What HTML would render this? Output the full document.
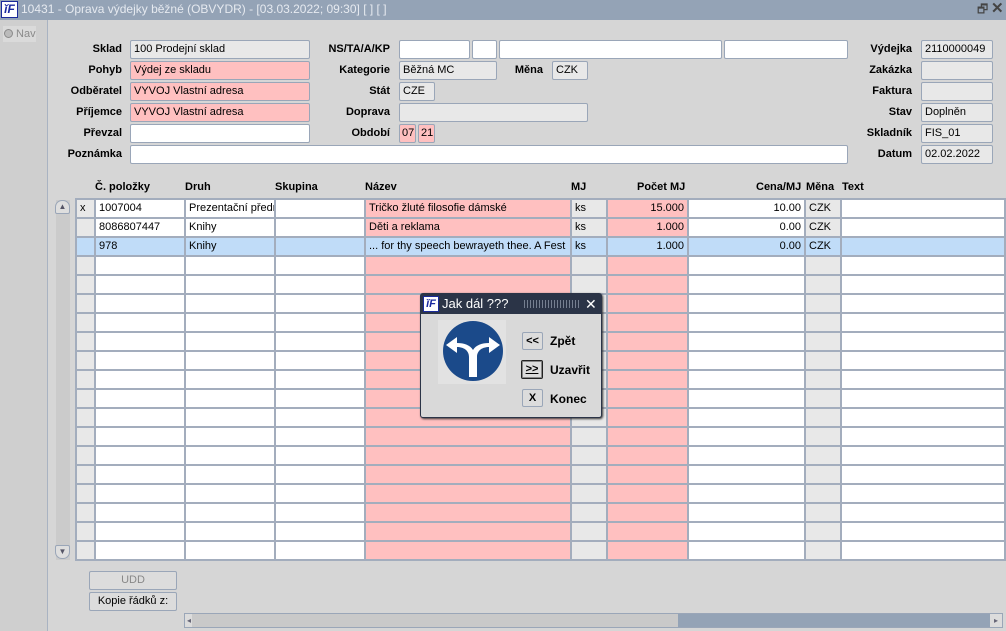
<!DOCTYPE html>
<html><head><meta charset="utf-8"><style>
*{box-sizing:border-box;margin:0;padding:0}
body{width:1006px;height:631px;background:#d6d6d6;font-family:"Liberation Sans",Arial,sans-serif;font-size:11px;position:relative;overflow:hidden;color:#000}
.a{position:absolute}
.tb{left:0;top:0;width:1006px;height:20px;background:#94a3b6;color:#e6eaf0;font-size:13px;line-height:19px}
.logo{position:absolute;width:17px;height:17px;background:#fff;border:1px solid #1a2a9a;color:#1a2aa0;font-weight:bold;font-style:italic;font-size:12px;line-height:15px;text-align:center}
.lbl{position:absolute;font-weight:bold;font-size:11px;text-align:right;line-height:18px}
.f{position:absolute;height:19px;border:1px solid #9aa6b8;border-radius:2px;background:#e8e8e8;padding-left:3px;line-height:17px;font-size:11px;white-space:nowrap;overflow:hidden}
.w{background:#fff}.p{background:#ffc0c0}
table{position:absolute;left:75px;top:198px;width:929px;border-collapse:collapse;table-layout:fixed}
td{border:2px solid #a3adbd;height:19px;padding:0 3px;font-size:11px;white-space:nowrap;overflow:hidden;background:#fff;line-height:15px}
td.g{background:#e8e8e8}td.pk{background:#ffc0c0}td.r{text-align:right}
tr.s td{background:#c0dcf8}
.th{position:absolute;top:181px;font-weight:bold;font-size:11px}
.btn{position:absolute;border:1px solid #9aa6b8;border-radius:2px;background:#dcdcdc;text-align:center;font-size:11px;line-height:16px}
</style></head><body>
<div class="a tb"><div class="logo" style="left:1px;top:1px">ĭF</div><span style="position:absolute;left:21px;font-size:12px">10431 - Oprava výdejky běžné (OBVYDR) - [03.03.2022; 09:30]  [ ]  [ ]</span>
<span style="position:absolute;left:977px;top:0;color:#444;font-size:12px">🗗</span><span style="position:absolute;left:991px;top:-1px;color:#444;font-size:15px;font-weight:bold">✕</span></div>
<div class="a" style="left:0;top:20px;width:48px;height:611px;background:#cfcfcf;border-right:1px solid #a9b3c2"></div>
<div class="a" style="left:3px;top:26px;width:33px;height:16px;background:#dadada;color:#8a8a8a;font-size:11px;line-height:16px;white-space:nowrap;overflow:hidden"><span style="display:inline-block;width:9px;height:9px;border-radius:50%;border:1px solid #8a8a8a;background:#bbb;vertical-align:-1px;margin-left:1px"></span> Nav</div>

<div class="lbl" style="left:60px;top:40px;width:62px">Sklad</div><div class="f" style="left:130px;top:40px;width:180px">100 Prodejní sklad</div>
<div class="lbl" style="left:60px;top:61px;width:62px">Pohyb</div><div class="f p" style="left:130px;top:61px;width:180px">Výdej ze skladu</div>
<div class="lbl" style="left:40px;top:82px;width:82px">Odběratel</div><div class="f p" style="left:130px;top:82px;width:180px">VYVOJ Vlastní adresa</div>
<div class="lbl" style="left:40px;top:103px;width:82px">Příjemce</div><div class="f p" style="left:130px;top:103px;width:180px">VYVOJ Vlastní adresa</div>
<div class="lbl" style="left:40px;top:124px;width:82px">Převzal</div><div class="f w" style="left:130px;top:124px;width:180px"></div>
<div class="lbl" style="left:40px;top:145px;width:82px">Poznámka</div><div class="f w" style="left:130px;top:145px;width:718px"></div>

<div class="lbl" style="left:300px;top:40px;width:90px">NS/TA/A/KP</div>
<div class="f w" style="left:399px;top:40px;width:71px"></div><div class="f w" style="left:472px;top:40px;width:25px"></div><div class="f w" style="left:499px;top:40px;width:223px"></div><div class="f w" style="left:724px;top:40px;width:124px"></div>
<div class="lbl" style="left:300px;top:61px;width:90px">Kategorie</div><div class="f" style="left:399px;top:61px;width:98px">Běžná MC</div>
<div class="lbl" style="left:500px;top:61px;width:43px">Měna</div><div class="f" style="left:552px;top:61px;width:36px">CZK</div>
<div class="lbl" style="left:300px;top:82px;width:90px">Stát</div><div class="f" style="left:399px;top:82px;width:36px">CZE</div>
<div class="lbl" style="left:300px;top:103px;width:90px">Doprava</div><div class="f" style="left:399px;top:103px;width:189px"></div>
<div class="lbl" style="left:300px;top:124px;width:90px">Období</div><div class="f p" style="left:399px;top:124px;width:17px;padding-left:2px">07</div><div class="f p" style="left:418px;top:124px;width:17px;padding-left:2px">21</div>

<div class="lbl" style="left:840px;top:40px;width:72px">Výdejka</div><div class="f" style="left:921px;top:40px;width:72px">2110000049</div>
<div class="lbl" style="left:840px;top:61px;width:72px">Zakázka</div><div class="f" style="left:921px;top:61px;width:72px"></div>
<div class="lbl" style="left:840px;top:82px;width:72px">Faktura</div><div class="f" style="left:921px;top:82px;width:72px"></div>
<div class="lbl" style="left:840px;top:103px;width:72px">Stav</div><div class="f" style="left:921px;top:103px;width:72px">Doplněn</div>
<div class="lbl" style="left:840px;top:124px;width:72px">Skladník</div><div class="f" style="left:921px;top:124px;width:72px">FIS_01</div>
<div class="lbl" style="left:840px;top:145px;width:72px">Datum</div><div class="f" style="left:921px;top:145px;width:72px">02.02.2022</div>

<div class="th" style="left:95px">Č. položky</div><div class="th" style="left:185px">Druh</div><div class="th" style="left:275px">Skupina</div><div class="th" style="left:365px">Název</div><div class="th" style="left:571px">MJ</div><div class="th" style="left:637px">Počet MJ</div><div class="th" style="left:756px">Cena/MJ</div><div class="th" style="left:806px">Měna</div><div class="th" style="left:842px">Text</div>

<div class="a" style="left:56px;top:200px;width:14px;height:360px;background:#cbcbcb"></div>
<div class="a" style="left:55px;top:200px;width:15px;height:14px;border:1px solid #9aa6b8;border-radius:7px 7px 2px 2px;background:#dedede;text-align:center;font-size:8px;color:#556;line-height:12px">▲</div>
<div class="a" style="left:55px;top:545px;width:15px;height:14px;border:1px solid #9aa6b8;border-radius:2px 2px 7px 7px;background:#dedede;text-align:center;font-size:8px;color:#556;line-height:12px">▼</div>

<table>
<colgroup><col style="width:19px"><col style="width:90px"><col style="width:90px"><col style="width:90px"><col style="width:206px"><col style="width:36px"><col style="width:81px"><col style="width:117px"><col style="width:36px"><col style="width:164px"></colgroup>
<tr><td class="g">x</td><td>1007004</td><td>Prezentační předmět</td><td></td><td class="pk">Tričko žluté filosofie dámské</td><td class="g">ks</td><td class="pk r">15.000</td><td class="r">10.00</td><td class="g">CZK</td><td></td></tr>
<tr><td class="g"></td><td>8086807447</td><td>Knihy</td><td></td><td class="pk">Děti a reklama</td><td class="g">ks</td><td class="pk r">1.000</td><td class="r">0.00</td><td class="g">CZK</td><td></td></tr>
<tr class="s"><td></td><td>978</td><td>Knihy</td><td></td><td>... for thy speech bewrayeth thee. A Fest</td><td>ks</td><td class="r">1.000</td><td class="r">0.00</td><td>CZK</td><td></td></tr>
<tr><td class="g"></td><td></td><td></td><td></td><td class="pk"></td><td class="g"></td><td class="pk"></td><td></td><td class="g"></td><td></td></tr>
<tr><td class="g"></td><td></td><td></td><td></td><td class="pk"></td><td class="g"></td><td class="pk"></td><td></td><td class="g"></td><td></td></tr>
<tr><td class="g"></td><td></td><td></td><td></td><td class="pk"></td><td class="g"></td><td class="pk"></td><td></td><td class="g"></td><td></td></tr>
<tr><td class="g"></td><td></td><td></td><td></td><td class="pk"></td><td class="g"></td><td class="pk"></td><td></td><td class="g"></td><td></td></tr>
<tr><td class="g"></td><td></td><td></td><td></td><td class="pk"></td><td class="g"></td><td class="pk"></td><td></td><td class="g"></td><td></td></tr>
<tr><td class="g"></td><td></td><td></td><td></td><td class="pk"></td><td class="g"></td><td class="pk"></td><td></td><td class="g"></td><td></td></tr>
<tr><td class="g"></td><td></td><td></td><td></td><td class="pk"></td><td class="g"></td><td class="pk"></td><td></td><td class="g"></td><td></td></tr>
<tr><td class="g"></td><td></td><td></td><td></td><td class="pk"></td><td class="g"></td><td class="pk"></td><td></td><td class="g"></td><td></td></tr>
<tr><td class="g"></td><td></td><td></td><td></td><td class="pk"></td><td class="g"></td><td class="pk"></td><td></td><td class="g"></td><td></td></tr>
<tr><td class="g"></td><td></td><td></td><td></td><td class="pk"></td><td class="g"></td><td class="pk"></td><td></td><td class="g"></td><td></td></tr>
<tr><td class="g"></td><td></td><td></td><td></td><td class="pk"></td><td class="g"></td><td class="pk"></td><td></td><td class="g"></td><td></td></tr>
<tr><td class="g"></td><td></td><td></td><td></td><td class="pk"></td><td class="g"></td><td class="pk"></td><td></td><td class="g"></td><td></td></tr>
<tr><td class="g"></td><td></td><td></td><td></td><td class="pk"></td><td class="g"></td><td class="pk"></td><td></td><td class="g"></td><td></td></tr>
<tr><td class="g"></td><td></td><td></td><td></td><td class="pk"></td><td class="g"></td><td class="pk"></td><td></td><td class="g"></td><td></td></tr>
<tr><td class="g"></td><td></td><td></td><td></td><td class="pk"></td><td class="g"></td><td class="pk"></td><td></td><td class="g"></td><td></td></tr>
<tr><td class="g"></td><td></td><td></td><td></td><td class="pk"></td><td class="g"></td><td class="pk"></td><td></td><td class="g"></td><td></td></tr>
</table>

<div class="btn" style="left:89px;top:571px;width:88px;height:19px;color:#888">UDD</div>
<div class="btn" style="left:89px;top:592px;width:88px;height:19px">Kopie řádků z:</div>
<div class="a" style="left:184px;top:613px;width:819px;height:15px;background:#94a3b6;border:1px solid #9aa6b8"></div>
<div class="a" style="left:185px;top:614px;width:154px;height:13px;background:#dcdcdc;border-right:1px solid #aaa;font-size:8px;color:#667;line-height:13px;padding-left:2px">◂</div>
<div class="a" style="left:192px;top:614px;width:486px;height:13px;background:#c9c9c9"></div>
<div class="a" style="left:990px;top:614px;width:12px;height:13px;background:#dcdcdc;font-size:8px;color:#667;line-height:13px;text-align:center">▸</div>

<div class="a" style="left:420px;top:293px;width:182px;height:125px;background:#d9d9d9;border:1px solid #2b3447;border-radius:3px;box-shadow:1px 1px 2px #333">
<div style="position:absolute;left:0;top:0;width:180px;height:20px;background:#2b3447;color:#fff;font-size:13px;line-height:20px">
<div class="logo" style="left:2px;top:2px;width:16px;height:16px;font-size:11px;line-height:14px">ĭF</div>
<span style="position:absolute;left:21px">Jak dál ???</span>
<span style="position:absolute;left:103px;top:6px;width:56px;height:8px;background:repeating-linear-gradient(90deg,#8892a2 0 1px,transparent 1px 3px);opacity:.8"></span>
<span style="position:absolute;left:164px;top:0;font-size:14px">✕</span></div>
<svg style="position:absolute;left:17px;top:26px" width="68" height="64" viewBox="0 0 68 64"><rect width="68" height="64" fill="#e2e2e2"/>
<circle cx="35" cy="31" r="30" fill="#1b4a8a"/>
<path d="M31 57 V37 C31 30 25 27 19 27 V33 L8 25 L19 17 V23 C26 23 32 25 35 30 C38 25 44 23 51 23 V17 L62 25 L51 33 V27 C45 27 39 30 39 37 V57 Z" fill="#fff"/></svg>
<div class="btn" style="left:101px;top:38px;width:21px;height:18px;font-weight:bold">&lt;&lt;</div><b style="position:absolute;left:129px;top:40px;font-size:12px">Zpět</b>
<div class="btn" style="left:100px;top:66px;width:22px;height:19px;font-weight:bold;border:1px solid #222;box-shadow:inset 0 0 0 1px #888"><u>&gt;&gt;</u></div><b style="position:absolute;left:129px;top:69px;font-size:12px">Uzavřit</b>
<div class="btn" style="left:101px;top:95px;width:21px;height:18px;font-weight:bold">X</div><b style="position:absolute;left:129px;top:98px;font-size:12px">Konec</b>
</div>
</body></html>
